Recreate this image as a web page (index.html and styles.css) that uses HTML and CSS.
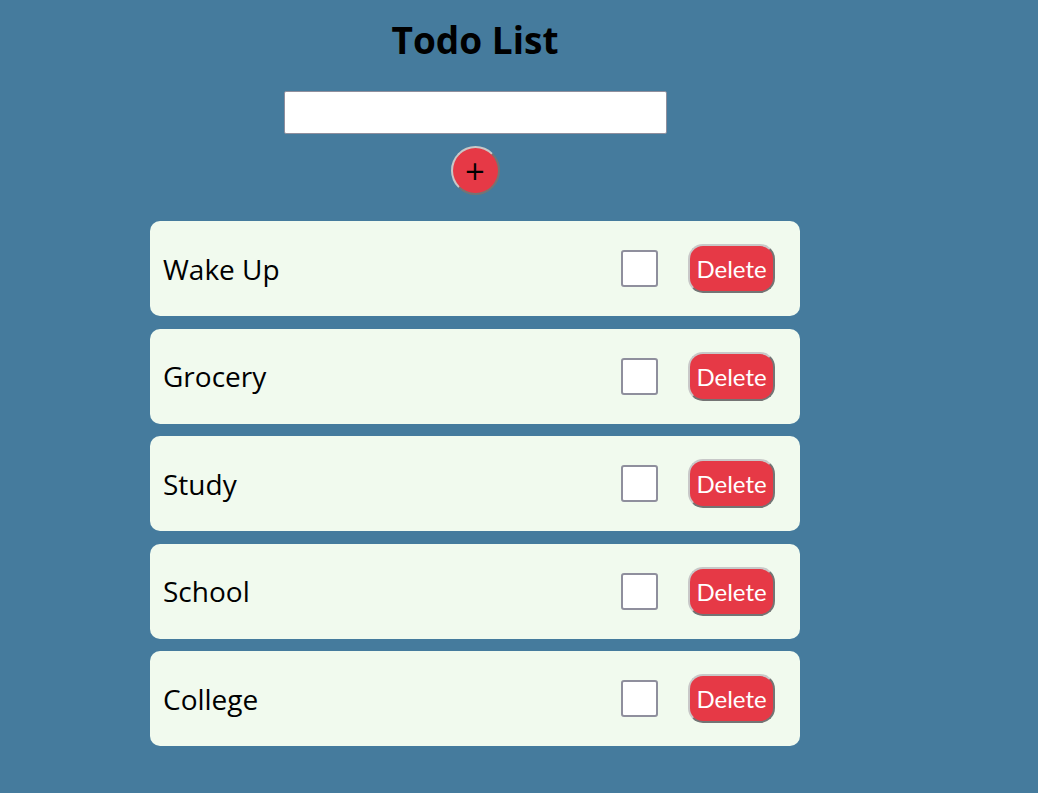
FILE: index.html
```html
<!DOCTYPE html>
<html>
<head>
<meta charset="utf-8">
<link rel="stylesheet" href="styles.css">
</head>
<body>
<div class="app">
  <h1 class="title">Todo List</h1>
  <div class="form">
    <input class="task-input" type="text">
    <button class="add-btn">+</button>
  </div>
  <ul class="list">
    <li class="item"><span class="label">Wake Up</span><span class="box"></span><button class="del">Delete</button></li>
    <li class="item"><span class="label">Grocery</span><span class="box"></span><button class="del">Delete</button></li>
    <li class="item"><span class="label">Study</span><span class="box"></span><button class="del">Delete</button></li>
    <li class="item"><span class="label">School</span><span class="box"></span><button class="del">Delete</button></li>
    <li class="item"><span class="label">College</span><span class="box"></span><button class="del">Delete</button></li>
  </ul>
</div>
</body>
</html>
```
FILE: styles.css
```css
html, body {
  margin: 0;
  padding: 0;
  background: #457b9d;
  font-family: "Open Sans", "DejaVu Sans", sans-serif;
}
.app {
  width: 650px;
  margin-left: 150px;
  padding-top: 18px;
}
.title {
  margin: 0;
  text-align: center;
  font-size: 37px;
  line-height: 44px;
  font-weight: bold;
  color: #000;
}
.form {
  display: flex;
  flex-direction: column;
  align-items: center;
  margin-top: 29px;
}
.task-input {
  box-sizing: border-box;
  width: 383px;
  height: 43px;
  border: 1px solid #8f8f9d;
  border-radius: 2px;
  background: #fff;
  margin: 0;
}
.add-btn {
  box-sizing: border-box;
  margin-top: 12px;
  width: 49px;
  height: 49px;
  border-radius: 50%;
  border: 2px outset #c8c8c8;
  background: #e63946;
  color: #000;
  font-size: 26px;
  line-height: 1;
  padding: 0;
  font-family: "DejaVu Sans", sans-serif;
}
.list {
  list-style: none;
  margin: 26px 0 0 0;
  padding: 0;
  display: flex;
  flex-direction: column;
  gap: 12.5px;
}
.item {
  box-sizing: border-box;
  height: 95px;
  background: #f1faee;
  border-radius: 10px;
  display: flex;
  align-items: center;
  padding: 0 25px 0 13px;
}
.label {
  flex: 1;
  font-size: 28px;
  color: #000;
}
.box {
  box-sizing: border-box;
  width: 37px;
  height: 37px;
  border: 2px solid #8f8f9d;
  border-radius: 3px;
  background: #fff;
  margin-right: 30px;
}
.del {
  box-sizing: border-box;
  width: 87px;
  height: 49px;
  border-radius: 15px;
  border: 2px outset #c8c8c8;
  background: #e63946;
  color: #fff;
  font-family: "Lato", "Open Sans", sans-serif;
  font-size: 24px;
  padding: 0;
}
```
